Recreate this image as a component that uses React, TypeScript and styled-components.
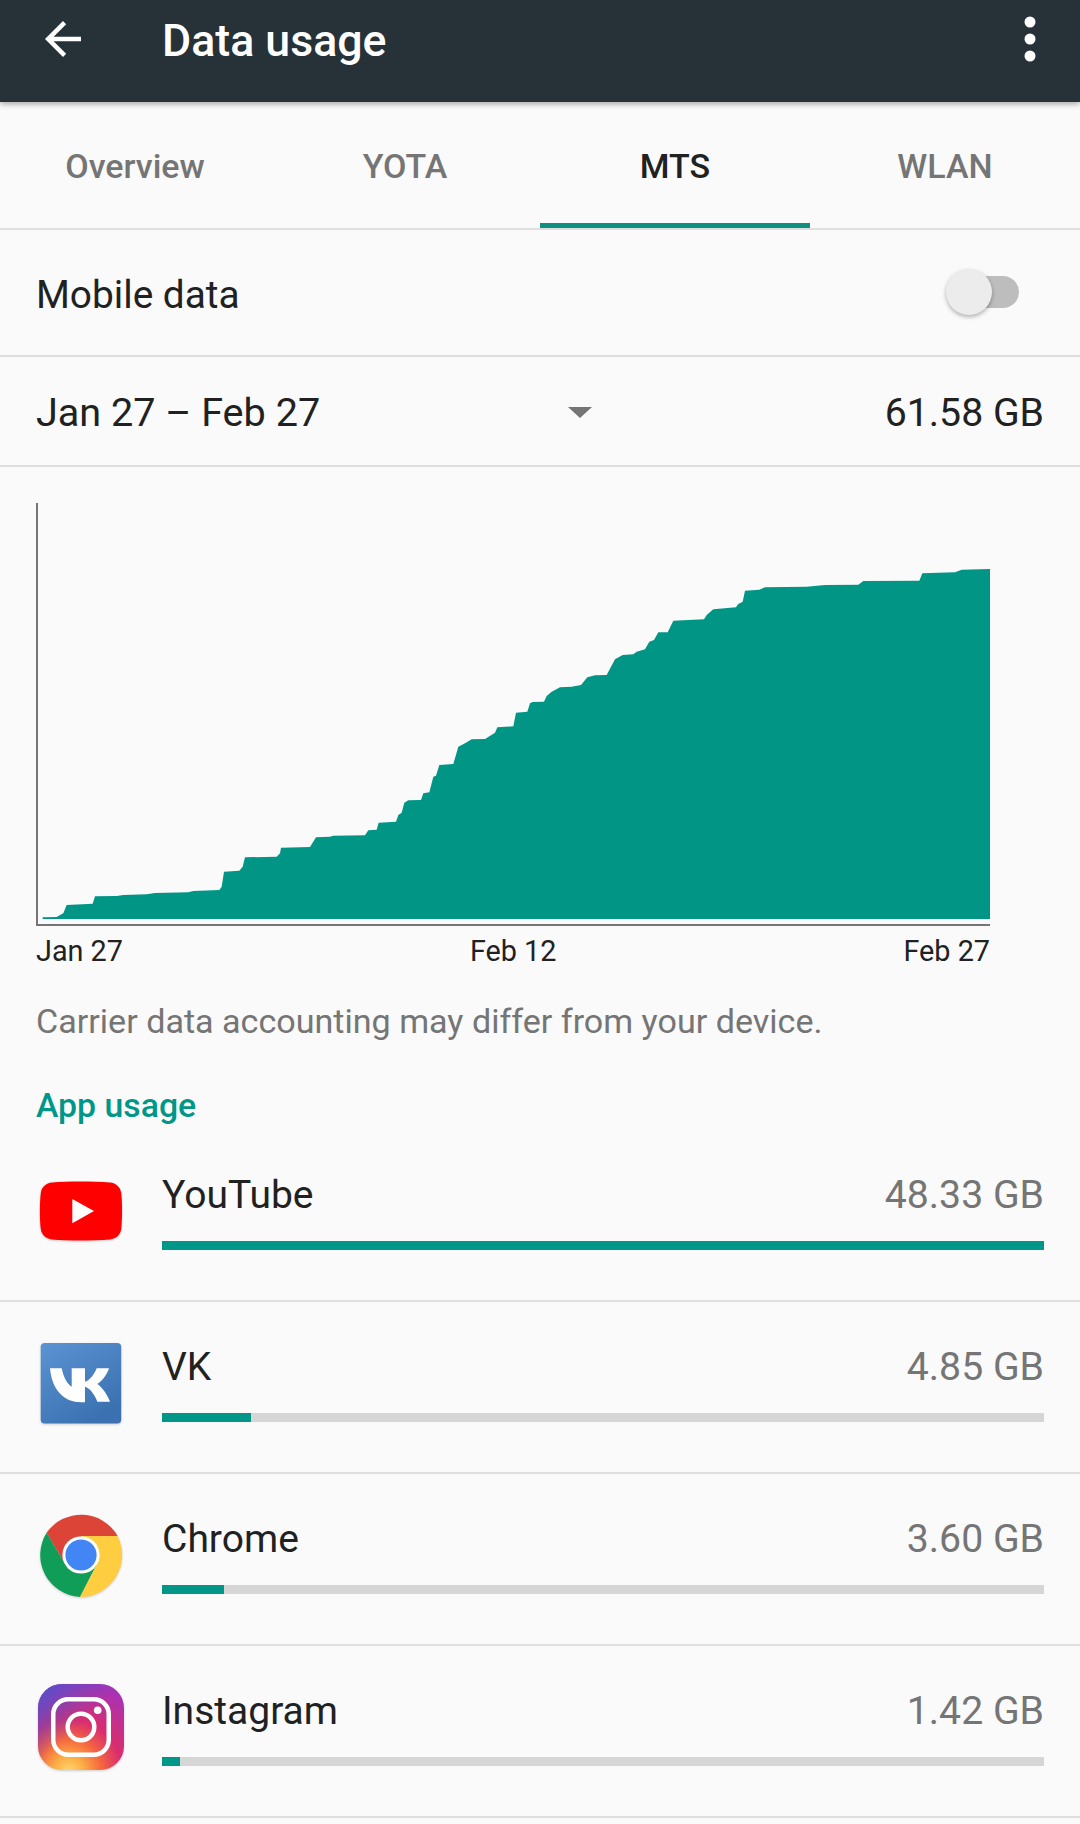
import styled, { createGlobalStyle } from "styled-components";

const GlobalStyle = createGlobalStyle`
  html, body {
    margin: 0;
    padding: 0;
    background: #fafafa;
  }
  body {
    font-family: Roboto, "Noto Sans", sans-serif;
    color: #212121;
  }
`;

const TEAL = "#009688";

type AppUsage = {
  name: string;
  amount: string;
  percent: number;
  icon: React.ReactNode;
};

// outline of the usage curve, traced from 3x crops of the chart
const curveLeft = [
  [68, 1282], [110, 1281], [130, 1270], [140, 1245], [218, 1241], [225, 1219], [290, 1218],
  [310, 1215], [380, 1213], [405, 1209], [505, 1207], [520, 1203], [598, 1200], [605, 1190],
  [612, 1145], [658, 1142], [668, 1130], [675, 1102], [770, 1100], [780, 1090], [783, 1073],
  [870, 1071], [888, 1042], [930, 1040], [940, 1037], [1035, 1036], [1045, 1021], [1070, 1019],
  [1076, 998], [1128, 995], [1135, 975], [1145, 968], [1153, 938], [1165, 931], [1203, 930],
  [1210, 910], [1228, 907], [1240, 860], [1248, 857], [1258, 825], [1300, 822], [1315, 770],
  [1335, 760], [1355, 748], [1395, 747], [1425, 728], [1432, 712], [1480, 709],
].map(([x, y]) => [x - 48, y - 30]);

const curveRight = [
  [48, 668], [82, 665], [90, 640], [98, 636], [132, 635], [140, 618], [155, 605], [180, 592],
  [215, 590], [243, 585], [262, 562], [285, 556], [320, 555], [345, 508], [368, 495], [400, 493],
  [410, 485], [435, 478], [448, 455], [462, 450], [475, 427], [503, 427], [520, 392], [612, 388],
  [620, 375], [640, 358], [708, 352], [715, 342], [728, 335], [735, 302], [778, 299], [795, 292],
  [920, 290], [975, 285], [1075, 284], [1090, 273], [1258, 272], [1267, 250], [1365, 247],
  [1385, 239], [1470, 237],
].map(([x, y]) => [x + 1392, y - 30]);

const curvePath =
  "M20 1257 L" +
  [...curveLeft, ...curveRight].map(([x, y]) => `${x} ${y}`).join(" L") +
  " L2862 1257 Z";

const YoutubeIcon = () => (
  <svg width="84" height="84" viewBox="0 0 84 84">
    <path
      d="M13 13.6 C28 12.2 54 12.2 71 13.6 C77 14.2 81.4 18 82.2 24 C83.4 33 83.4 51 82.2 60 C81.4 66 77 69.8 71 70.4 C54 71.8 28 71.8 13 70.4 C7 69.8 2.6 66 1.8 60 C0.6 51 0.6 33 1.8 24 C2.6 18 7 14.2 13 13.6 Z"
      fill="#ff0000"
    />
    <path d="M33.3 30 L55 42 L33.3 54.3 Z" fill="#fff" />
  </svg>
);

const VkIcon = () => (
  <svg width="84" height="84" viewBox="0 0 84 84">
    <defs>
      <linearGradient id="vkBg" x1="0" y1="0" x2="0.6" y2="1">
        <stop offset="0" stopColor="#5b94d3" />
        <stop offset="1" stopColor="#3b71b1" />
      </linearGradient>
    </defs>
    <rect x="1.7" y="2" width="80.5" height="80.5" rx="4" fill="url(#vkBg)" />
    <path
      d="M11 27.3 H22.7 C24.5 36 28 43 32.7 45.7 V27.3 H46 V40.7 C50 40 55 34 57.7 27.3 H70 C68 34 63 40 58.3 43 C63 46 68 53 71 60.7 H58.3 C56 54 51 47 46 45.7 V61.3 H42 C26 61.3 13 50 11 27.3 Z"
      fill="#fff"
    />
  </svg>
);

const ChromeIcon = () => (
  <svg width="84" height="84" viewBox="0 0 84 84" overflow="visible">
    <path d="M42 23 L78.6 23 A42 42 0 0 0 7.6 19.8 L26 51 L42 42 Z" fill="#db4437" />
    <path d="M26 51 L7.6 19.8 A42 42 0 0 0 41 84 L58 51 Z" fill="#0f9d58" />
    <path d="M58 51 L41 84 A42 42 0 0 0 78.6 23 L42 23 Z" fill="#ffcd40" />
    <circle cx="42" cy="42" r="18.6" fill="#fff" />
    <circle cx="42" cy="42" r="15.6" fill="#4285f4" />
  </svg>
);

const InstagramIcon = () => (
  <svg width="84" height="84" viewBox="0 0 84 84" overflow="visible">
    <defs>
      <radialGradient id="igBg" cx="0.36" cy="1.02" r="1.05">
        <stop offset="0" stopColor="#ffd776" />
        <stop offset="0.16" stopColor="#fcb045" />
        <stop offset="0.36" stopColor="#f5673f" />
        <stop offset="0.58" stopColor="#d92d6e" />
        <stop offset="1" stopColor="#a832b4" />
      </radialGradient>
      <linearGradient id="igTop" x1="0.05" y1="0" x2="0.5" y2="0.45">
        <stop offset="0" stopColor="#5250cc" />
        <stop offset="1" stopColor="#5250cc" stopOpacity="0" />
      </linearGradient>
    </defs>
    <rect x="-1" y="-1" width="86" height="86" rx="24" fill="url(#igBg)" />
    <rect x="-1" y="-1" width="86" height="86" rx="24" fill="url(#igTop)" />
    <rect x="14.25" y="14.25" width="55.5" height="55.5" rx="15" fill="none" stroke="#fff" strokeWidth="4.5" />
    <circle cx="42" cy="42" r="13.3" fill="none" stroke="#fff" strokeWidth="4.5" />
    <circle cx="58.7" cy="25.3" r="3.8" fill="#fff" />
  </svg>
);

const apps: AppUsage[] = [
  { name: "YouTube", amount: "48.33 GB", percent: 100, icon: <YoutubeIcon /> },
  { name: "VK", amount: "4.85 GB", percent: 10.1, icon: <VkIcon /> },
  { name: "Chrome", amount: "3.60 GB", percent: 7, icon: <ChromeIcon /> },
  { name: "Instagram", amount: "1.42 GB", percent: 2, icon: <InstagramIcon /> },
];

const tabs = ["Overview", "YOTA", "MTS", "WLAN"];

const App = () => {
  return (
    <Page>
      <GlobalStyle />
      <Toolbar>
        <IconSlot>
          <svg width="54" height="54" viewBox="0 0 24 24" fill="#fff">
            <path d="M20 11H7.83l5.59-5.59L12 4l-8 8 8 8 1.41-1.41L7.83 13H20v-2z" />
          </svg>
        </IconSlot>
        <Title>Data usage</Title>
        <IconSlot>
          <svg width="54" height="54" viewBox="0 0 54 54" fill="#fff">
            <circle cx="27" cy="10" r="5.5" />
            <circle cx="27" cy="27" r="5.5" />
            <circle cx="27" cy="44" r="5.5" />
          </svg>
        </IconSlot>
      </Toolbar>

      <TabBar>
        {tabs.map((tab) => (
          <Tab key={tab} $active={tab === "MTS"}>
            {tab}
          </Tab>
        ))}
      </TabBar>

      <SwitchRow>
        <MobileLabel>Mobile data</MobileLabel>
        <SwitchTrack>
          <SwitchThumb />
        </SwitchTrack>
      </SwitchRow>

      <CycleRow>
        <CycleRange>Jan 27 – Feb 27</CycleRange>
        <Caret />
        <RowLabel>61.58 GB</RowLabel>
      </CycleRow>

      <ChartSection>
        <ChartSvg width="956" height="430" viewBox="0 0 2868 1290">
          <path d={curvePath} fill="#009585" />
          <path d="M3 9 V1275 H2862" fill="none" stroke="#757575" strokeWidth="6" />
        </ChartSvg>
        <AxisLabels>
          <span>Jan 27</span>
          <span>Feb 12</span>
          <span>Feb 27</span>
        </AxisLabels>
        <Note>Carrier data accounting may differ from your device.</Note>
        <SectionTitle>App usage</SectionTitle>
      </ChartSection>

      {apps.map((app) => (
        <AppRow key={app.name}>
          <AppIcon>{app.icon}</AppIcon>
          <AppBody>
            <AppLine>
              <AppName>{app.name}</AppName>
              <AppAmount>{app.amount}</AppAmount>
            </AppLine>
            <Bar>
              <BarFill $percent={app.percent} />
            </Bar>
          </AppBody>
        </AppRow>
      ))}
    </Page>
  );
};

const Page = styled.div`
  width: 1080px;
  height: 1824px;
  overflow: hidden;
  background: #fafafa;
`;

const Toolbar = styled.header`
  position: relative;
  z-index: 1;
  display: flex;
  align-items: center;
  height: 102px;
  padding: 0 23px 24px 36px;
  box-sizing: border-box;
  background: #263238;
  box-shadow: 0 2px 6px rgba(0, 0, 0, 0.35);
`;

const IconSlot = styled.div`
  display: flex;
  width: 54px;
  height: 54px;
`;

const Title = styled.h1`
  flex: 1;
  margin: 4px 0 0 72px;
  color: #fff;
  font-size: 44.7px;
  font-weight: 500;
  line-height: 54px;
`;

const TabBar = styled.nav`
  display: flex;
  border-bottom: 2px solid #dedede;
`;

const Tab = styled.div<{ $active: boolean }>`
  display: flex;
  flex: 1;
  align-items: center;
  justify-content: center;
  height: 126px;
  padding-top: 6px;
  box-sizing: border-box;
  border-bottom: 5px solid ${(p) => (p.$active ? "#0e8f80" : "transparent")};
  color: ${(p) => (p.$active ? "#212121" : "#757575")};
  font-size: 34px;
  font-weight: 500;
`;

const SwitchRow = styled.div`
  display: flex;
  align-items: center;
  justify-content: space-between;
  height: 127px;
  padding: 4px 61px 0 36px;
  box-sizing: border-box;
  border-bottom: 2px solid #dedede;
`;

const RowLabel = styled.div`
  font-size: 39.2px;
  line-height: 48px;
`;

const MobileLabel = styled(RowLabel)`
  font-size: 38.8px;
`;

const CycleRange = styled(RowLabel)`
  font-size: 39.6px;
`;

const SwitchTrack = styled.div`
  position: relative;
  width: 69px;
  height: 32px;
  margin-bottom: 6px;
  border-radius: 16px;
  background: #bdbdbd;
`;

const SwitchThumb = styled.div`
  position: absolute;
  top: -7px;
  left: -4px;
  width: 46px;
  height: 46px;
  border-radius: 50%;
  background: #ececec;
  box-shadow: 0 2px 4px rgba(0, 0, 0, 0.3);
`;

const CycleRow = styled.div`
  display: flex;
  align-items: center;
  height: 110px;
  padding: 4px 36px 0;
  box-sizing: border-box;
  border-bottom: 2px solid #dedede;
`;

const Caret = styled.div`
  width: 0;
  height: 0;
  margin: 0 auto 2px 248px;
  border-top: 11px solid #757575;
  border-left: 12px solid transparent;
  border-right: 12px solid transparent;
`;

const ChartSection = styled.section`
  padding: 33px 0 0 36px;
`;

const ChartSvg = styled.svg`
  display: block;
`;

const AxisLabels = styled.div`
  display: flex;
  justify-content: space-between;
  width: 954px;
  margin-top: 5px;
  font-size: 28.8px;
  line-height: 32px;
`;

const Note = styled.p`
  margin: 32px 0 0;
  color: #757575;
  font-size: 34.1px;
  line-height: 44px;
`;

const SectionTitle = styled.h2`
  margin: 41px 0 2px;
  color: ${TEAL};
  font-size: 33.8px;
  font-weight: 500;
  line-height: 44px;
`;

const AppRow = styled.div`
  display: flex;
  height: 172px;
  padding: 39px 36px 0 39px;
  box-sizing: border-box;
  border-bottom: 2px solid #dedede;
`;

const AppIcon = styled.div`
  flex: none;
  width: 84px;
  height: 84px;
  margin-right: 39px;
  filter: drop-shadow(0 1px 1px rgba(0, 0, 0, 0.18));
`;

const AppBody = styled.div`
  flex: 1;
  padding-top: 2px;
`;

const AppLine = styled.div`
  display: flex;
  justify-content: space-between;
  line-height: 48px;
`;

const AppName = styled.span`
  font-size: 39px;
`;

const AppAmount = styled.span`
  color: #757575;
  font-size: 39.2px;
`;

const Bar = styled.div`
  height: 9px;
  margin-top: 22px;
  background: #d6d6d6;
`;

const BarFill = styled.div<{ $percent: number }>`
  width: ${(p) => p.$percent}%;
  height: 100%;
  background: ${TEAL};
`;

export default App;
